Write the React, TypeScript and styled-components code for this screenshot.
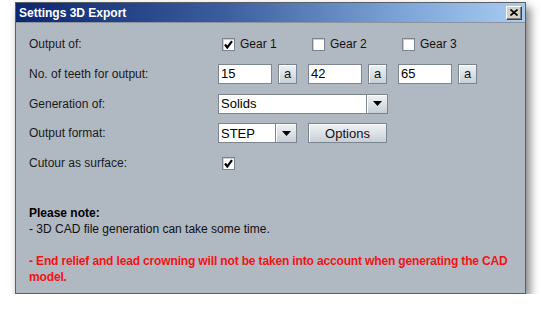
import React from 'react';
import styled, { createGlobalStyle } from 'styled-components';

const GlobalStyle = createGlobalStyle`
  html, body {
    margin: 0;
    padding: 0;
    background: #ffffff;
  }
  body {
    font-family: "Liberation Sans", Arial, sans-serif;
    font-size: 12px;
    color: #111;
  }
`;

const Stage = styled.div`
  padding: 2px 0 0 15px;
`;

const Window = styled.div`
  width: 511px;
  height: 292px;
  box-sizing: border-box;
  border: 1px solid #5c5f63;
  background: #b0b8c2;
  box-shadow: 4px 5px 9px rgba(0, 0, 0, 0.5);
  display: flex;
  flex-direction: column;
`;

const TitleBar = styled.div`
  height: 19px;
  display: flex;
  align-items: center;
  justify-content: space-between;
  padding: 0 3px 0 3px;
  background: linear-gradient(to right, #0c2670 0%, #3a5c9c 40%, #7ba3d6 75%, #a8ccf2 100%);
  border-bottom: 1px solid #8b949e;
`;

const Title = styled.span`
  color: #fff;
  font-family: "Liberation Sans", Arial, sans-serif;
  font-weight: bold;
  font-size: 12px;
`;

const CloseButton = styled.div`
  width: 16px;
  height: 14px;
  box-sizing: border-box;
  background: #d4d0c8;
  border: 1px solid;
  border-color: #ffffff #404040 #404040 #ffffff;
  box-shadow: inset -1px -1px 0 #808080;
  display: flex;
  align-items: center;
  justify-content: center;
`;

const Body = styled.div`
  padding: 11px 12px 0 13px;
`;

const Form = styled.div`
  display: grid;
  grid-template-columns: 189px 1fr;
  grid-auto-rows: 20px;
  row-gap: 9.75px;
  align-items: center;
`;

const Label = styled.div`
  color: #1a1a1a;
`;

const ControlRow = styled.div<{ $gap?: number }>`
  display: flex;
  align-items: center;
  gap: ${(p) => p.$gap ?? 0}px;
  height: 20px;
`;

const GearOption = styled.label`
  width: 90px;
  display: flex;
  align-items: center;
  gap: 5px;
  padding-left: 4px;
  box-sizing: border-box;
`;

const Box = styled.span`
  width: 13px;
  height: 13px;
  box-sizing: border-box;
  background: #fff;
  border: 1px solid #7b848e;
  box-shadow: inset 1px 1px 0 #c9ced4;
  display: flex;
  align-items: center;
  justify-content: center;
`;

const Field = styled.div<{ $w: number }>`
  width: ${(p) => p.$w}px;
  height: 20px;
  box-sizing: border-box;
  background: #fff;
  border: 1px solid #7d8690;
  padding: 0 2px;
  display: flex;
  align-items: center;
  font-size: 13px;
  color: #000;
`;

const TeethGroup = styled.div`
  width: 90px;
  display: flex;
  align-items: center;
  gap: 6px;
`;

const Button = styled.div<{ $w: number }>`
  width: ${(p) => p.$w}px;
  height: 20px;
  box-sizing: border-box;
  border: 1px solid #7b858f;
  background: linear-gradient(to bottom, #eef1f4 0%, #dde2e7 50%, #c8ced5 100%);
  box-shadow: inset 1px 1px 0 #ffffff;
  display: flex;
  align-items: center;
  justify-content: center;
  font-size: 13px;
  color: #111;
`;

const Combo = styled.div`
  display: flex;
  align-items: stretch;
  height: 20px;
`;

const ArrowButton = styled(Button)`
  border-left: none;
`;

const Note = styled.div`
  margin-top: 32px;
  line-height: 16px;
  font-size: 12px;
`;

const NoteTitle = styled.div`
  font-weight: bold;
  color: #000;
`;

const Warning = styled.div`
  margin-top: 16px;
  color: #f21414;
  font-weight: bold;
  letter-spacing: -0.15px;
`;

const Check = () => (
  <svg width="9" height="9" viewBox="0 0 9 9">
    <path d="M1 4.5 L3.3 7.5 L8 1.2" fill="none" stroke="#000" strokeWidth="2.2" />
  </svg>
);

const CheckBox: React.FC<{ checked?: boolean }> = ({ checked }) => (
  <Box>{checked && <Check />}</Box>
);

const Arrow = () => (
  <svg width="9" height="5" viewBox="0 0 9 5">
    <path d="M0 0 H9 L4.5 5 Z" fill="#000" />
  </svg>
);

const gears = [
  { name: 'Gear 1', checked: true },
  { name: 'Gear 2', checked: false },
  { name: 'Gear 3', checked: false },
];

const teeth = ['15', '42', '65'];

const App: React.FC = () => {
  return (
    <Stage>
      <GlobalStyle />
      <Window>
        <TitleBar>
          <Title>Settings 3D Export</Title>
          <CloseButton>
            <svg width="8" height="7" viewBox="0 0 8 7">
              <path d="M0.5 0.5 L7.5 6.5 M7.5 0.5 L0.5 6.5" stroke="#000" strokeWidth="1.6" />
            </svg>
          </CloseButton>
        </TitleBar>
        <Body>
          <Form>
            <Label>Output of:</Label>
            <ControlRow>
              {gears.map((g) => (
                <GearOption key={g.name}>
                  <CheckBox checked={g.checked} />
                  {g.name}
                </GearOption>
              ))}
            </ControlRow>

            <Label>No. of teeth for output:</Label>
            <ControlRow>
              {teeth.map((t) => (
                <TeethGroup key={t}>
                  <Field $w={54}>{t}</Field>
                  <Button $w={19}>a</Button>
                </TeethGroup>
              ))}
            </ControlRow>

            <Label>Generation of:</Label>
            <ControlRow>
              <Combo>
                <Field $w={149}>Solids</Field>
                <ArrowButton $w={21}>
                  <Arrow />
                </ArrowButton>
              </Combo>
            </ControlRow>

            <Label>Output format:</Label>
            <ControlRow $gap={11}>
              <Combo>
                <Field $w={58}>STEP</Field>
                <ArrowButton $w={21}>
                  <Arrow />
                </ArrowButton>
              </Combo>
              <Button $w={79}>Options</Button>
            </ControlRow>

            <Label>Cutour as surface:</Label>
            <ControlRow>
              <GearOption>
                <CheckBox checked />
              </GearOption>
            </ControlRow>
          </Form>
          <Note>
            <NoteTitle>Please note:</NoteTitle>
            <div>- 3D CAD file generation can take some time.</div>
            <Warning>
              - End relief and lead crowning will not be taken into account when generating the CAD model.
            </Warning>
          </Note>
        </Body>
      </Window>
    </Stage>
  );
};

export default App;
